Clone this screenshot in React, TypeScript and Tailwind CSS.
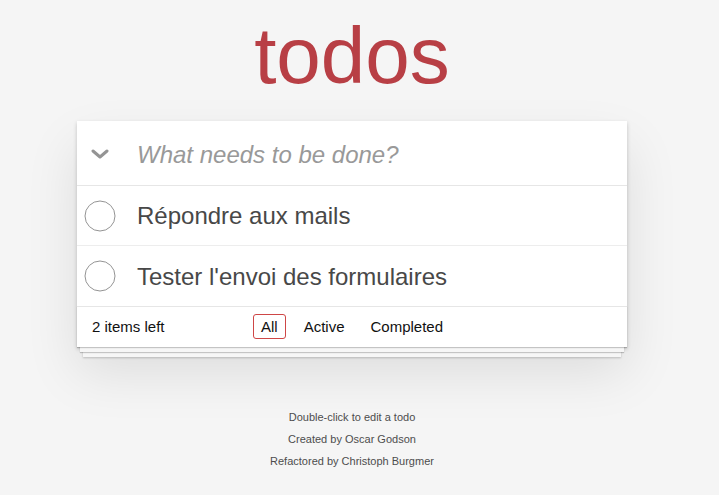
import React from "react";

export default function App() {
  const items = ["Répondre aux mails", "Tester l'envoi des formulaires"];
  return (
    <div
      className="min-h-[495px] w-full bg-[#f5f5f5] text-[#111]"
      style={{ fontFamily: '"Liberation Sans", Arial, Helvetica, sans-serif' }}
    >
      <div className="w-[704px]">
        <div className="mx-auto w-[550px] pt-[16px]">
          <h1 className="h-[80px] text-center text-[80px] leading-[80px] font-extralight text-[#b83f45]">
            todos
          </h1>
          <div className="mt-[25px] bg-white shadow-[0_2px_4px_0_rgba(0,0,0,0.2),0_25px_50px_0_rgba(0,0,0,0.1)]">
            <div className="flex h-[65px] items-center border-b border-[#e6e6e6]">
              <div className="flex w-[60px] items-center justify-center pr-[14px] pt-[2px]">
                <svg width="18" height="10" viewBox="0 0 18 10">
                  <path d="M2 2 L9 8 L16 2" fill="none" stroke="#949494" strokeWidth="3" strokeLinecap="round" strokeLinejoin="round" />
                </svg>
              </div>
              <span className="pt-[3px] text-[24px] italic text-[#999]">What needs to be done?</span>
            </div>
            {items.map((t, i) => (
              <div
                key={t}
                className={`flex h-[60px] items-center ${i === 0 ? "border-b border-[#ededed]" : ""}`}
              >
                <div className="flex w-[60px] items-center justify-center pr-[14px]">
                  <svg width="32" height="32" viewBox="0 0 32 32">
                    <circle cx="16" cy="16" r="15" fill="none" stroke="#949494" strokeWidth="1" />
                  </svg>
                </div>
                <span className="text-[24px] leading-[29px] text-[#484848]">{t}</span>
              </div>
            ))}
            <div className="relative flex h-[41px] items-center border-t border-[#e6e6e6] px-[15px] text-[15px] shadow-[0_1px_1px_rgba(0,0,0,0.2),0_8px_0_-3px_#f6f6f6,0_9px_1px_-3px_rgba(0,0,0,0.2),0_16px_0_-6px_#f6f6f6,0_17px_2px_-6px_rgba(0,0,0,0.2)]">
              <span className="w-[150px]">2 items left</span>
              <div className="absolute inset-x-0 top-[7px] flex justify-center gap-[10px]">
                <span className="rounded-[3px] border border-[#ce4646] px-[7px] py-[3px] leading-[17px]">All</span>
                <span className="rounded-[3px] border border-transparent px-[7px] py-[3px] leading-[17px]">Active</span>
                <span className="rounded-[3px] border border-transparent px-[7px] py-[3px] leading-[17px]">Completed</span>
              </div>
            </div>
          </div>
          <div className="mt-[65px] flex flex-col items-center gap-[11px] text-[11px] leading-[11px] text-[#4d4d4d]">
            <p>Double-click to edit a todo</p>
            <p>Created by Oscar Godson</p>
            <p>Refactored by Christoph Burgmer</p>
          </div>
        </div>
      </div>
    </div>
  );
}
